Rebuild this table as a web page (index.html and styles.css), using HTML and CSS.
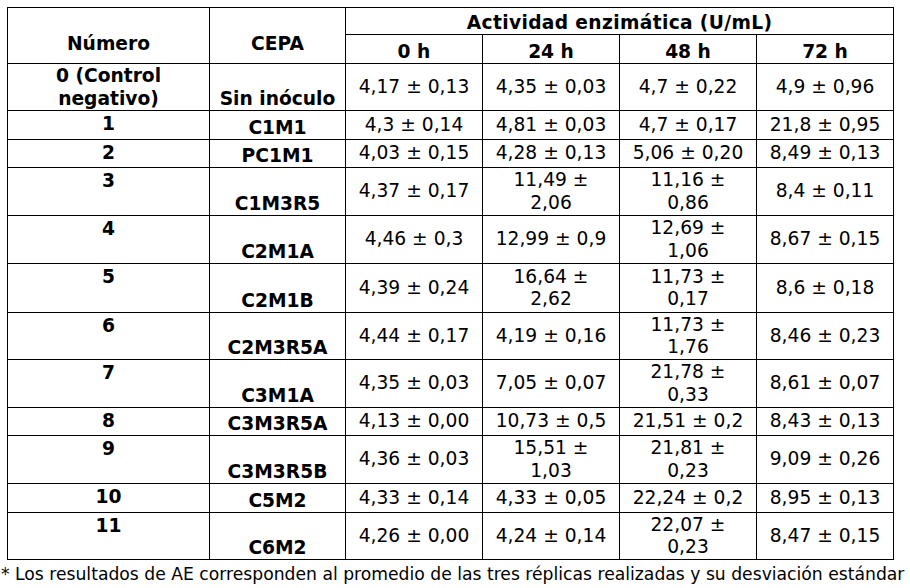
FILE: index.html
```html
<!DOCTYPE html>
<html lang="es">
<head>
<meta charset="utf-8">
<title>Actividad enzimática</title>
<link rel="stylesheet" href="styles.css">
</head>
<body>
<table class="data">
  <colgroup>
    <col class="c-num"><col class="c-cepa"><col class="c-v"><col class="c-v"><col class="c-v"><col class="c-v">
  </colgroup>
  <thead>
    <tr class="h27">
      <th class="hd-main" rowspan="2">Número</th>
      <th class="hd-main" rowspan="2">CEPA</th>
      <th class="hd-top" colspan="4">Actividad enzimática (U/mL)</th>
    </tr>
    <tr class="h29">
      <th class="hd-sub">0 h</th>
      <th class="hd-sub">24 h</th>
      <th class="hd-sub">48 h</th>
      <th class="hd-sub">72 h</th>
    </tr>
  </thead>
  <tbody>
    <tr class="h47">
      <td class="num num-tight">0 (Control<br>negativo)</td>
      <td class="cepa">Sin inóculo</td>
      <td class="val">4,17 ± 0,13</td><td class="val">4,35 ± 0,03</td><td class="val">4,7 ± 0,22</td><td class="val">4,9 ± 0,96</td>
    </tr>
    <tr class="h29">
      <td class="num">1</td><td class="cepa">C1M1</td>
      <td class="val">4,3 ± 0,14</td><td class="val">4,81 ± 0,03</td><td class="val">4,7 ± 0,17</td><td class="val">21,8 ± 0,95</td>
    </tr>
    <tr class="h28">
      <td class="num">2</td><td class="cepa">PC1M1</td>
      <td class="val">4,03 ± 0,15</td><td class="val">4,28 ± 0,13</td><td class="val">5,06 ± 0,20</td><td class="val">8,49 ± 0,13</td>
    </tr>
    <tr class="h48">
      <td class="num">3</td><td class="cepa">C1M3R5</td>
      <td class="val">4,37 ± 0,17</td><td class="val">11,49 ±<br>2,06</td><td class="val">11,16 ±<br>0,86</td><td class="val">8,4 ± 0,11</td>
    </tr>
    <tr class="h48">
      <td class="num">4</td><td class="cepa">C2M1A</td>
      <td class="val">4,46 ± 0,3</td><td class="val">12,99 ± 0,9</td><td class="val">12,69 ±<br>1,06</td><td class="val">8,67 ± 0,15</td>
    </tr>
    <tr class="h49">
      <td class="num">5</td><td class="cepa">C2M1B</td>
      <td class="val">4,39 ± 0,24</td><td class="val">16,64 ±<br>2,62</td><td class="val">11,73 ±<br>0,17</td><td class="val">8,6 ± 0,18</td>
    </tr>
    <tr class="h47">
      <td class="num">6</td><td class="cepa">C2M3R5A</td>
      <td class="val">4,44 ± 0,17</td><td class="val">4,19 ± 0,16</td><td class="val">11,73 ±<br>1,76</td><td class="val">8,46 ± 0,23</td>
    </tr>
    <tr class="h48">
      <td class="num">7</td><td class="cepa">C3M1A</td>
      <td class="val">4,35 ± 0,03</td><td class="val">7,05 ± 0,07</td><td class="val">21,78 ±<br>0,33</td><td class="val">8,61 ± 0,07</td>
    </tr>
    <tr class="h28">
      <td class="num">8</td><td class="cepa">C3M3R5A</td>
      <td class="val">4,13 ± 0,00</td><td class="val">10,73 ± 0,5</td><td class="val">21,51 ± 0,2</td><td class="val">8,43 ± 0,13</td>
    </tr>
    <tr class="h48">
      <td class="num">9</td><td class="cepa">C3M3R5B</td>
      <td class="val">4,36 ± 0,03</td><td class="val">15,51 ±<br>1,03</td><td class="val">21,81 ±<br>0,23</td><td class="val">9,09 ± 0,26</td>
    </tr>
    <tr class="h29">
      <td class="num">10</td><td class="cepa">C5M2</td>
      <td class="val">4,33 ± 0,14</td><td class="val">4,33 ± 0,05</td><td class="val">22,24 ± 0,2</td><td class="val">8,95 ± 0,13</td>
    </tr>
    <tr class="h47">
      <td class="num">11</td><td class="cepa">C6M2</td>
      <td class="val">4,26 ± 0,00</td><td class="val">4,24 ± 0,14</td><td class="val">22,07 ±<br>0,23</td><td class="val">8,47 ± 0,15</td>
    </tr>
  </tbody>
</table>
<p class="note">* Los resultados de AE corresponden al promedio de las tres réplicas realizadas y su desviación estándar</p>
</body>
</html>
```
FILE: styles.css
```css
html, body {
  margin: 0;
  padding: 0;
  background: #ffffff;
  color: #000000;
}

body {
  font-family: "DejaVu Sans", Verdana, sans-serif;
}

.data {
  border-collapse: collapse;
  table-layout: fixed;
  width: 886px;
  margin: 7px 0 0 7px;
  font-size: 18.67px;
  line-height: 22.5px;
}

.c-num { width: 202px; }
.c-cepa { width: 136px; }
.c-v { width: 137px; }

.data th,
.data td {
  border: 1px solid #000000;
  padding: 0 2px;
  text-align: center;
  white-space: nowrap;
}

.data th {
  font-weight: bold;
}

.data .hd-main {
  vertical-align: bottom;
  padding-bottom: 8px;
}

.data .hd-top {
  vertical-align: bottom;
  letter-spacing: 0.35px;
}

.data .hd-sub {
  vertical-align: bottom;
}

.h27 { height: 27px; }
.h28 { height: 28px; }
.h29 { height: 29px; }
.h47 { height: 47px; }
.h48 { height: 48px; }
.h49 { height: 49px; }

.data .num {
  font-weight: bold;
  vertical-align: top;
  padding-top: 2px;
}

.data .num-tight {
  padding-top: 1px;
}

.data .cepa {
  font-weight: bold;
  vertical-align: bottom;
  line-height: 17px;
  padding-bottom: 3px;
}

.data .val {
  vertical-align: middle;
}

.note {
  margin: 4px 0 0 1px;
  font-size: 17.2px;
  line-height: 20px;
  white-space: nowrap;
}
```
